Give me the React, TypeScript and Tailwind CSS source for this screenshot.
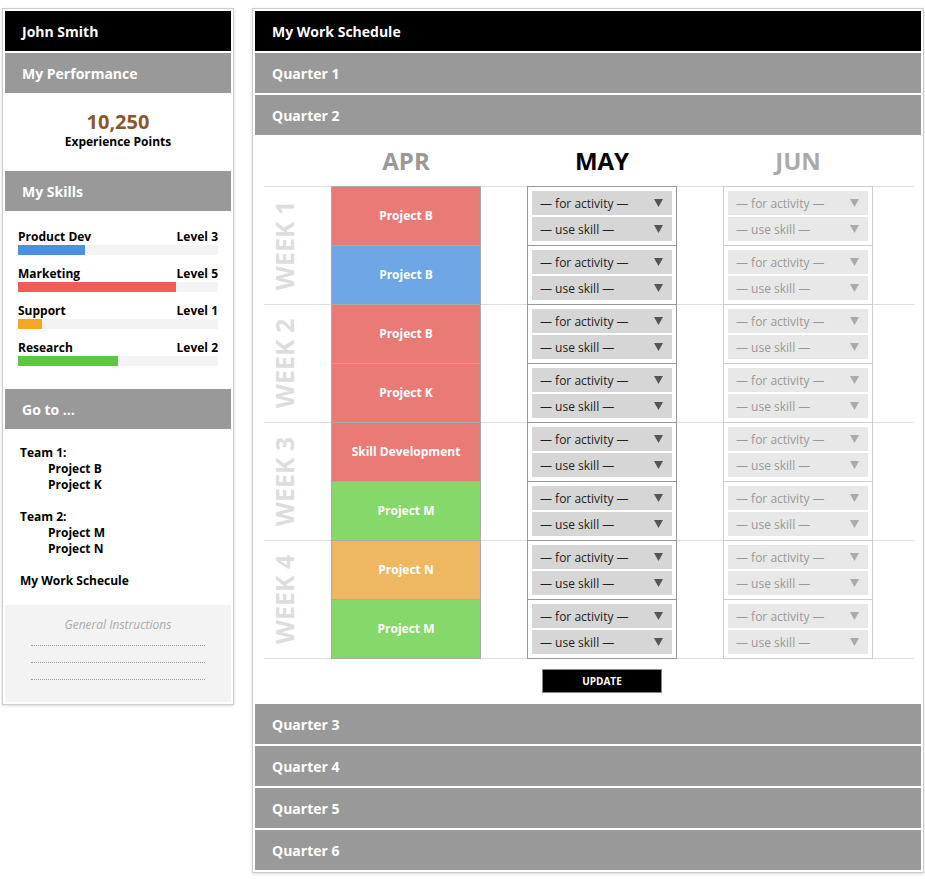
import React from 'react';

const skills = [
  { name: 'Product Dev', level: 'Level 3', pct: 33.5, color: 'bg-[#4a90e2]' },
  { name: 'Marketing', level: 'Level 5', pct: 79, color: 'bg-[#f05c57]' },
  { name: 'Support', level: 'Level 1', pct: 12, color: 'bg-[#f5a623]' },
  { name: 'Research', level: 'Level 2', pct: 50, color: 'bg-[#5ec545]' },
];

const red = 'bg-[#ea7a75]';
const blue = 'bg-[#6ea6e6]';
const green = 'bg-[#87d86a]';
const orange = 'bg-[#f0b763]';

const weeks: { label: string; apr: [string, string][] }[] = [
  { label: 'WEEK 1', apr: [['Project B', red], ['Project B', blue]] },
  { label: 'WEEK 2', apr: [['Project B', red], ['Project K', red]] },
  { label: 'WEEK 3', apr: [['Skill Development', red], ['Project M', green]] },
  { label: 'WEEK 4', apr: [['Project N', orange], ['Project M', green]] },
];

function Bar({ title, dark }: { title: string; dark?: boolean }) {
  return (
    <div
      className={`flex h-[40px] items-center pl-[17px] text-[14px] font-bold text-white ${dark ? 'bg-black' : 'bg-[#999]'}`}
    >
      {title}
    </div>
  );
}

function Arrow({ dim }: { dim?: boolean }) {
  return (
    <svg width="9" height="8" viewBox="0 0 9 8">
      <polygon points="0,0 9,0 4.5,8" fill={dim ? '#aaa' : '#555'} />
    </svg>
  );
}

function Pick({ label, dim }: { label: string; dim?: boolean }) {
  return (
    <div
      className={`flex h-[24px] items-center justify-between pl-[8px] pr-[9px] text-[12px] ${dim ? 'bg-[#e8e8e8] text-[#999]' : 'bg-[#d6d6d6] text-[#222]'}`}
    >
      <span className="pt-[1px]">{label}</span>
      <Arrow dim={dim} />
    </div>
  );
}

function Picks({ dim }: { dim?: boolean }) {
  return (
    <div className="flex flex-col gap-[2px] px-[4px] pt-[4px]">
      <Pick label="— for activity —" dim={dim} />
      <Pick label="— use skill —" dim={dim} />
    </div>
  );
}

function Sidebar() {
  return (
    <div className="flex w-[232px] flex-col border border-[#ccc] bg-white p-[2px] shadow-[0_1px_3px_rgba(0,0,0,0.15)]">
      <Bar title="John Smith" dark />
      <div className="mt-[2px]">
        <Bar title="My Performance" />
      </div>
      <div className="flex h-[78px] flex-col items-center pt-[19px]">
        <div className="text-[20px] leading-[20px] font-bold text-[#8b572a]">10,250</div>
        <div className="mt-[2px] text-[12px] leading-[15px] font-bold text-black">Experience Points</div>
      </div>
      <Bar title="My Skills" />
      <div className="flex h-[178px] flex-col px-[13px] pt-[18px]">
        {skills.map((s) => (
          <div key={s.name} className="mb-[11px]">
            <div className="flex justify-between text-[12px] leading-[15px] font-bold text-black">
              <span>{s.name}</span>
              <span>{s.level}</span>
            </div>
            <div className="mt-[1px] h-[10px] bg-[#f3f3f3]">
              <div className={`h-full ${s.color}`} style={{ width: `${s.pct}%` }} />
            </div>
          </div>
        ))}
      </div>
      <Bar title="Go to ..." />
      <div className="flex flex-col py-[16px] pl-[15px] text-[12px] leading-[16px] font-bold text-black">
        <span>Team 1:</span>
        <span className="pl-[28px]">Project B</span>
        <span className="pl-[28px]">Project K</span>
        <span className="h-[16px]" />
        <span>Team 2:</span>
        <span className="pl-[28px]">Project M</span>
        <span className="pl-[28px]">Project N</span>
        <span className="h-[16px]" />
        <span>My Work Schecule</span>
      </div>
      <div className="flex h-[97px] flex-col bg-[#f3f3f3] px-[26px] pt-[12px]">
        <div className="text-center text-[12px] leading-[16px] text-[#aaa] italic">General Instructions</div>
        <div className="mt-[12px] flex flex-col gap-[16px]">
          <div className="border-b border-dotted border-[#999]" />
          <div className="border-b border-dotted border-[#999]" />
          <div className="border-b border-dotted border-[#999]" />
        </div>
      </div>
    </div>
  );
}

function Schedule() {
  return (
    <div className="flex flex-col pl-[9px]">
      <div className="flex h-[51px] items-center text-[24px] font-bold">
        <div className="w-[67px]" />
        <div className="w-[150px] text-center text-[#999]">APR</div>
        <div className="ml-[46px] w-[150px] text-center text-black">MAY</div>
        <div className="ml-[46px] w-[150px] text-center text-[#aaa]">JUN</div>
      </div>
      <div className="w-[650px] border-b border-[#ddd]">
        {weeks.map((w) => (
          <div key={w.label} className="flex h-[118px] border-t border-[#ddd]">
            <div className="flex w-[67px] items-center justify-center pr-[25px]">
              <span className="-rotate-90 text-[25px] leading-none font-bold whitespace-nowrap text-[#ddd]">
                {w.label}
              </span>
            </div>
            <div className="-mt-px flex h-[119px] w-[150px] flex-col border border-[#aaa]">
              {w.apr.map(([name, color], i) => (
                <div
                  key={i}
                  className={`flex items-center justify-center text-[12px] font-bold text-white ${color} ${i === 0 ? 'h-[58px]' : 'h-[59px] border-t border-[#aaa]'}`}
                >
                  {name}
                </div>
              ))}
            </div>
            <div className="-mt-px ml-[46px] flex h-[119px] w-[150px] flex-col border border-[#999] bg-white">
              <div className="h-[58px]">
                <Picks />
              </div>
              <div className="h-[59px] border-t border-[#999]">
                <Picks />
              </div>
            </div>
            <div className="-mt-px ml-[46px] flex h-[119px] w-[150px] flex-col border border-[#ccc] bg-white">
              <div className="h-[58px]">
                <Picks dim />
              </div>
              <div className="h-[59px] border-t border-[#ccc]">
                <Picks dim />
              </div>
            </div>
          </div>
        ))}
      </div>
      <div className="flex pt-[10px] pb-[11px]">
        <div className="w-[263px]" />
        <div className="flex w-[150px] justify-center">
          <button className="flex h-[24px] w-[120px] items-center justify-center border border-[#888] bg-black text-[10px] font-bold text-white">
            UPDATE
          </button>
        </div>
      </div>
    </div>
  );
}

export default function App() {
  return (
    <div className="flex min-h-screen items-start gap-[18px] bg-white pt-[8px] pl-[2px] font-['Open_Sans',sans-serif]">
      <Sidebar />
      <div className="flex w-[672px] flex-col border border-[#ccc] bg-white p-[2px] shadow-[0_1px_3px_rgba(0,0,0,0.15)]">
        <Bar title="My Work Schedule" dark />
        <div className="mt-[2px]">
          <Bar title="Quarter 1" />
        </div>
        <div className="mt-[2px]">
          <Bar title="Quarter 2" />
        </div>
        <Schedule />
        <Bar title="Quarter 3" />
        {['Quarter 4', 'Quarter 5', 'Quarter 6'].map((q) => (
          <div key={q} className="mt-[2px]">
            <Bar title={q} />
          </div>
        ))}
      </div>
    </div>
  );
}
